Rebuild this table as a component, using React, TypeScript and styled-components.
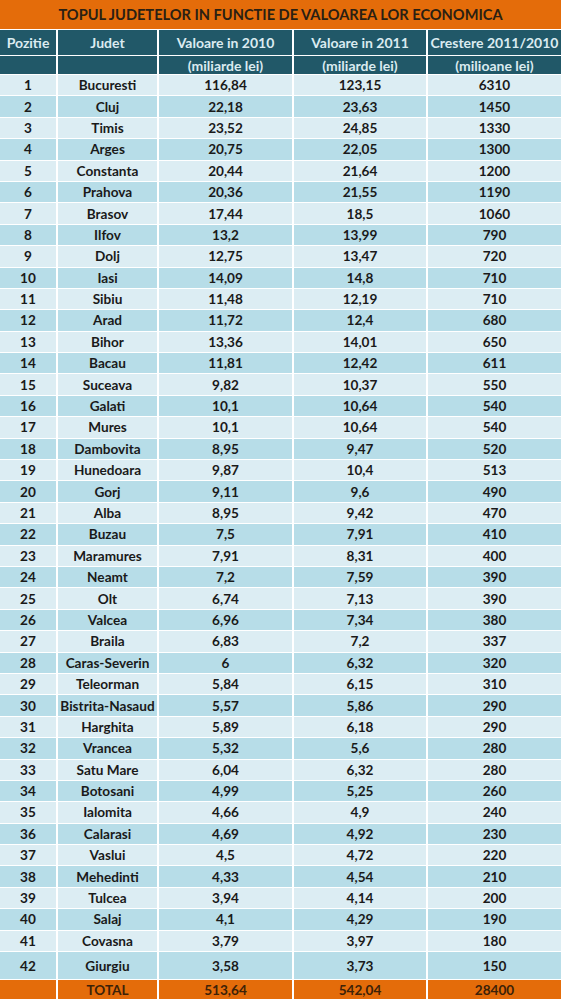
import React from "react";
import styled, { createGlobalStyle } from "styled-components";

const GlobalStyle = createGlobalStyle`
  html, body { margin: 0; padding: 0; background: #ffffff; }
  body { font-family: Lato, "Open Sans", sans-serif; }
`;

const COLS = "56px 99px 133px 132px 1fr";

const Sheet = styled.div`
  width: 561px;
  display: flex;
  flex-direction: column;
  gap: 1px;
  background: #ffffff;
`;

const Title = styled.div`
  height: 29px;
  background: #e46c0a;
  color: #2a2013;
  font-weight: 700;
  font-size: 14.6px;
  display: flex;
  align-items: center;
  justify-content: center;
`;

const Row = styled.div<{ $h: number; $tone: "head" | "light" | "dark" | "total" }>`
  display: grid;
  grid-template-columns: ${COLS};
  column-gap: 2px;
  height: ${(p) => p.$h}px;
  & > div {
    background: ${(p) =>
      p.$tone === "head"
        ? "#215868"
        : p.$tone === "light"
        ? "#dcedf3"
        : p.$tone === "dark"
        ? "#b7dde8"
        : "#e46c0a"};
    color: ${(p) =>
      p.$tone === "head" ? "#dbebf0" : p.$tone === "total" ? "#3d2208" : "#1a1a1a"};
  }
`;

const Cell = styled.div<{ $size?: number }>`
  display: flex;
  align-items: center;
  justify-content: center;
  font-weight: 700;
  font-size: ${(p) => p.$size ?? 13.6}px;
  white-space: nowrap;
`;

type D = [string, string, string, string];
const data: D[] = [
  ["Bucuresti", "116,84", "123,15", "6310"],
  ["Cluj", "22,18", "23,63", "1450"],
  ["Timis", "23,52", "24,85", "1330"],
  ["Arges", "20,75", "22,05", "1300"],
  ["Constanta", "20,44", "21,64", "1200"],
  ["Prahova", "20,36", "21,55", "1190"],
  ["Brasov", "17,44", "18,5", "1060"],
  ["Ilfov", "13,2", "13,99", "790"],
  ["Dolj", "12,75", "13,47", "720"],
  ["Iasi", "14,09", "14,8", "710"],
  ["Sibiu", "11,48", "12,19", "710"],
  ["Arad", "11,72", "12,4", "680"],
  ["Bihor", "13,36", "14,01", "650"],
  ["Bacau", "11,81", "12,42", "611"],
  ["Suceava", "9,82", "10,37", "550"],
  ["Galati", "10,1", "10,64", "540"],
  ["Mures", "10,1", "10,64", "540"],
  ["Dambovita", "8,95", "9,47", "520"],
  ["Hunedoara", "9,87", "10,4", "513"],
  ["Gorj", "9,11", "9,6", "490"],
  ["Alba", "8,95", "9,42", "470"],
  ["Buzau", "7,5", "7,91", "410"],
  ["Maramures", "7,91", "8,31", "400"],
  ["Neamt", "7,2", "7,59", "390"],
  ["Olt", "6,74", "7,13", "390"],
  ["Valcea", "6,96", "7,34", "380"],
  ["Braila", "6,83", "7,2", "337"],
  ["Caras-Severin", "6", "6,32", "320"],
  ["Teleorman", "5,84", "6,15", "310"],
  ["Bistrita-Nasaud", "5,57", "5,86", "290"],
  ["Harghita", "5,89", "6,18", "290"],
  ["Vrancea", "5,32", "5,6", "280"],
  ["Satu Mare", "6,04", "6,32", "280"],
  ["Botosani", "4,99", "5,25", "260"],
  ["Ialomita", "4,66", "4,9", "240"],
  ["Calarasi", "4,69", "4,92", "230"],
  ["Vaslui", "4,5", "4,72", "220"],
  ["Mehedinti", "4,33", "4,54", "210"],
  ["Tulcea", "3,94", "4,14", "200"],
  ["Salaj", "4,1", "4,29", "190"],
  ["Covasna", "3,79", "3,97", "180"],
  ["Giurgiu", "3,58", "3,73", "150"],
];

export default function App() {
  return (
    <>
      <GlobalStyle />
      <Sheet>
        <Title>TOPUL JUDETELOR IN FUNCTIE DE VALOAREA LOR ECONOMICA</Title>
        <Row $h={25} $tone="head">
          <Cell $size={14}>Pozitie</Cell>
          <Cell $size={14}>Judet</Cell>
          <Cell $size={14}>Valoare in 2010</Cell>
          <Cell $size={14}>Valoare in 2011</Cell>
          <Cell $size={14}>Crestere 2011/2010</Cell>
        </Row>
        <Row $h={18} $tone="head">
          <Cell />
          <Cell />
          <Cell $size={14}>(miliarde lei)</Cell>
          <Cell $size={14}>(miliarde lei)</Cell>
          <Cell $size={14}>(milioane lei)</Cell>
        </Row>
        {data.map((r, i) => (
          <Row
            key={r[0]}
            $h={i === data.length - 1 ? 27 : 20.4}
            $tone={i % 2 === 0 ? "light" : "dark"}
          >
            <Cell>{i + 1}</Cell>
            <Cell>{r[0]}</Cell>
            <Cell>{r[1]}</Cell>
            <Cell>{r[2]}</Cell>
            <Cell>{r[3]}</Cell>
          </Row>
        ))}
        <Row $h={19} $tone="total">
          <Cell />
          <Cell>TOTAL</Cell>
          <Cell>513,64</Cell>
          <Cell>542,04</Cell>
          <Cell>28400</Cell>
        </Row>
      </Sheet>
    </>
  );
}
